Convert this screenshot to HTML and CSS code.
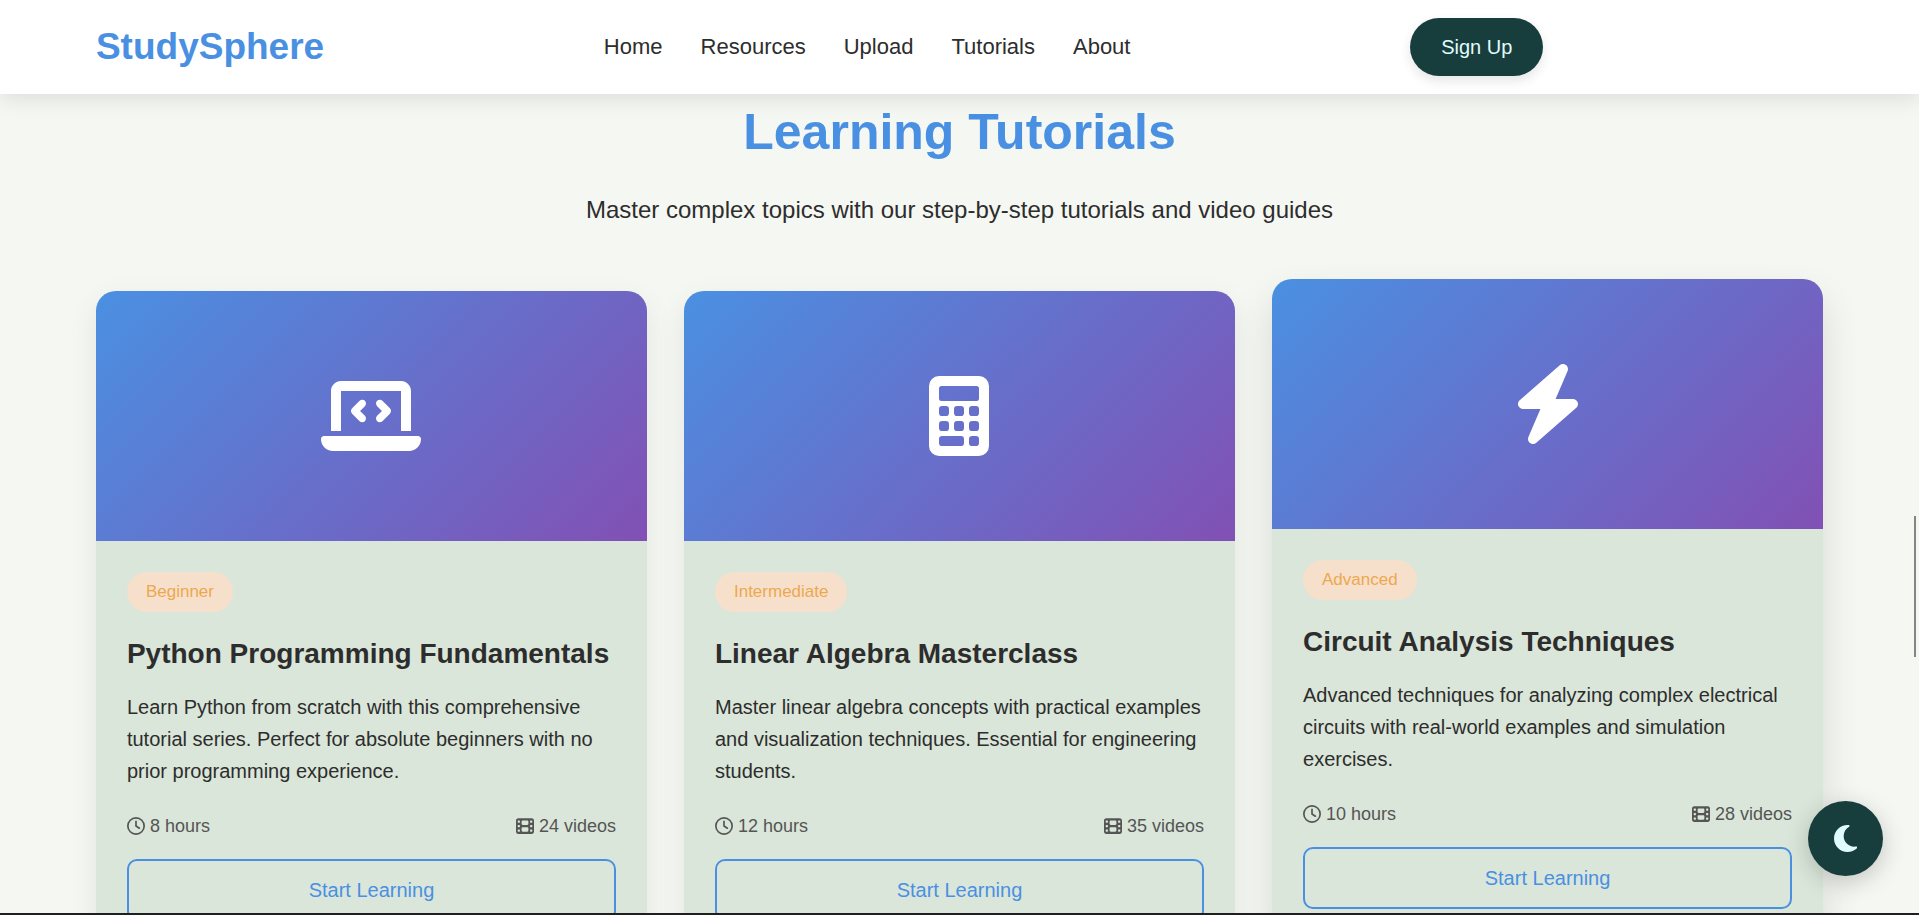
FILE: index.html
```html
<!DOCTYPE html>
<html lang="en">
<head>
<meta charset="utf-8">
<meta name="viewport" content="width=device-width, initial-scale=1">
<title>StudySphere</title>
<link rel="stylesheet" href="styles.css">
</head>
<body>
<svg class="sprite" aria-hidden="true">
  <symbol id="clock" viewBox="0 0 512 512"><path d="M464 256A208 208 0 1 1 48 256a208 208 0 1 1 416 0zM0 256a256 256 0 1 0 512 0A256 256 0 1 0 0 256zM232 120V256c0 8 4 15.5 10.7 20l96 64c11 7.4 25.9 4.4 33.3-6.7s4.4-25.9-6.7-33.3L280 243.2V120c0-13.3-10.7-24-24-24s-24 10.7-24 24z"/></symbol>
  <symbol id="film" viewBox="0 0 512 512"><path fill-rule="evenodd" d="M0 96C0 60.7 28.7 32 64 32H448c35.3 0 64 28.7 64 64V416c0 35.3-28.7 64-64 64H64c-35.3 0-64-28.7-64-64V96zM48 368v32c0 8.8 7.2 16 16 16H96c8.8 0 16-7.2 16-16V368c0-8.8-7.2-16-16-16H64c-8.8 0-16 7.2-16 16zm368-16c-8.8 0-16 7.2-16 16v32c0 8.8 7.2 16 16 16h32c8.8 0 16-7.2 16-16V368c0-8.8-7.2-16-16-16H416zM48 240v32c0 8.8 7.2 16 16 16H96c8.8 0 16-7.2 16-16V240c0-8.8-7.2-16-16-16H64c-8.8 0-16 7.2-16 16zm368-16c-8.8 0-16 7.2-16 16v32c0 8.8 7.2 16 16 16h32c8.8 0 16-7.2 16-16V240c0-8.8-7.2-16-16-16H416zM48 112v32c0 8.8 7.2 16 16 16H96c8.8 0 16-7.2 16-16V112c0-8.8-7.2-16-16-16H64c-8.8 0-16 7.2-16 16zm368-16c-8.8 0-16 7.2-16 16v32c0 8.8 7.2 16 16 16h32c8.8 0 16-7.2 16-16V112c0-8.8-7.2-16-16-16H416zM160 128v64c0 17.7 14.3 32 32 32H320c17.7 0 32-14.3 32-32V128c0-17.7-14.3-32-32-32H192c-17.7 0-32 14.3-32 32zm32 160c-17.7 0-32 14.3-32 32v64c0 17.7 14.3 32 32 32H320c17.7 0 32-14.3 32-32V320c0-17.7-14.3-32-32-32H192z"/></symbol>
</svg>

<header class="header">
  <a class="logo" href="#">StudySphere</a>
  <nav class="nav">
    <a href="#">Home</a>
    <a href="#">Resources</a>
    <a href="#">Upload</a>
    <a href="#">Tutorials</a>
    <a href="#">About</a>
  </nav>
  <button class="signup" type="button">Sign Up</button>
</header>

<main class="tutorials">
  <h2 class="section-title">Learning Tutorials</h2>
  <p class="section-subtitle">Master complex topics with our step-by-step tutorials and video guides</p>
  <div class="grid">
    <article class="card">
      <div class="thumb">
        <svg class="thumb-icon" viewBox="0 0 640 512" aria-hidden="true"><path d="M64 96c0-35.3 28.7-64 64-64H512c35.3 0 64 28.7 64 64V352H512V96H128V352H64V96zM0 403.2C0 392.6 8.6 384 19.2 384H620.8c10.6 0 19.2 8.6 19.2 19.2c0 42.4-34.4 76.8-76.8 76.8H76.8C34.4 480 0 445.6 0 403.2zM281 193l-31 31 31 31c9.4 9.4 9.4 24.6 0 33.9s-24.6 9.4-33.9 0l-48-48c-9.4-9.4-9.4-24.6 0-33.9l48-48c9.4-9.4 24.6-9.4 33.9 0s9.4 24.6 0 33.9zM393 159l48 48c9.4 9.4 9.4 24.6 0 33.9l-48 48c-9.4 9.4-24.6 9.4-33.9 0s-9.4-24.6 0-33.9l31-31-31-31c-9.4-9.4-9.4-24.6 0-33.9s24.6-9.4 33.9 0z"/></svg>
      </div>
      <div class="card-body">
        <span class="level">Beginner</span>
        <h3 class="card-title">Python Programming Fundamentals</h3>
        <p class="card-text">Learn Python from scratch with this comprehensive tutorial series. Perfect for absolute beginners with no prior programming experience.</p>
        <div class="meta">
          <span class="meta-item"><svg class="meta-icon" aria-hidden="true"><use href="#clock"/></svg>8 hours</span>
          <span class="meta-item"><svg class="meta-icon" aria-hidden="true"><use href="#film"/></svg>24 videos</span>
        </div>
        <button class="start" type="button">Start Learning</button>
      </div>
    </article>
    <article class="card">
      <div class="thumb">
        <svg class="thumb-icon" viewBox="0 0 384 512" aria-hidden="true"><path fill-rule="evenodd" d="M64 0H320a64 64 0 0 1 64 64V448a64 64 0 0 1-64 64H64a64 64 0 0 1-64-64V64A64 64 0 0 1 64 0zM80 64a16 16 0 0 0-16 16v64a16 16 0 0 0 16 16H304a16 16 0 0 0 16-16V80a16 16 0 0 0-16-16zM84 192h24a20 20 0 0 1 20 20v24a20 20 0 0 1-20 20h-24a20 20 0 0 1-20-20v-24a20 20 0 0 1 20-20zM180 192h24a20 20 0 0 1 20 20v24a20 20 0 0 1-20 20h-24a20 20 0 0 1-20-20v-24a20 20 0 0 1 20-20zM276 192h24a20 20 0 0 1 20 20v24a20 20 0 0 1-20 20h-24a20 20 0 0 1-20-20v-24a20 20 0 0 1 20-20zM84 288h24a20 20 0 0 1 20 20v24a20 20 0 0 1-20 20h-24a20 20 0 0 1-20-20v-24a20 20 0 0 1 20-20zM180 288h24a20 20 0 0 1 20 20v24a20 20 0 0 1-20 20h-24a20 20 0 0 1-20-20v-24a20 20 0 0 1 20-20zM276 288h24a20 20 0 0 1 20 20v24a20 20 0 0 1-20 20h-24a20 20 0 0 1-20-20v-24a20 20 0 0 1 20-20zM84 384h120a20 20 0 0 1 20 20v24a20 20 0 0 1-20 20h-120a20 20 0 0 1-20-20v-24a20 20 0 0 1 20-20zM276 384h24a20 20 0 0 1 20 20v24a20 20 0 0 1-20 20h-24a20 20 0 0 1-20-20v-24a20 20 0 0 1 20-20z"/></svg>
      </div>
      <div class="card-body">
        <span class="level">Intermediate</span>
        <h3 class="card-title">Linear Algebra Masterclass</h3>
        <p class="card-text">Master linear algebra concepts with practical examples and visualization techniques. Essential for engineering students.</p>
        <div class="meta">
          <span class="meta-item"><svg class="meta-icon" aria-hidden="true"><use href="#clock"/></svg>12 hours</span>
          <span class="meta-item"><svg class="meta-icon" aria-hidden="true"><use href="#film"/></svg>35 videos</span>
        </div>
        <button class="start" type="button">Start Learning</button>
      </div>
    </article>
    <article class="card card-raised">
      <div class="thumb">
        <svg class="thumb-icon" viewBox="0 0 448 512" aria-hidden="true"><path d="M349.4 44.6c5.9-13.7 1.5-29.7-10.6-38.5s-28.6-8-39.9 1.8l-256 224c-10 8.8-13.6 22.9-8.9 35.3S50.7 288 64 288H175.5L98.6 467.4c-5.9 13.7-1.5 29.7 10.6 38.5s28.6 8 39.9-1.8l256-224c10-8.8 13.6-22.9 8.9-35.3s-16.6-20.7-30-20.7H272.5L349.4 44.6z"/></svg>
      </div>
      <div class="card-body">
        <span class="level">Advanced</span>
        <h3 class="card-title">Circuit Analysis Techniques</h3>
        <p class="card-text">Advanced techniques for analyzing complex electrical circuits with real-world examples and simulation exercises.</p>
        <div class="meta">
          <span class="meta-item"><svg class="meta-icon" aria-hidden="true"><use href="#clock"/></svg>10 hours</span>
          <span class="meta-item"><svg class="meta-icon" aria-hidden="true"><use href="#film"/></svg>28 videos</span>
        </div>
        <button class="start" type="button">Start Learning</button>
      </div>
    </article>
  </div>
</main>

<button class="theme-toggle" type="button" aria-label="Toggle dark mode">
  <svg class="theme-icon" viewBox="0 0 384 512" aria-hidden="true"><path d="M223.5 32C100 32 0 132.3 0 256S100 480 223.5 480c60.6 0 115.5-24.2 155.8-63.4c5-4.9 6.3-12.5 3.1-18.7s-10.1-9.7-17-8.5c-9.8 1.7-19.8 2.6-30.1 2.6c-96.9 0-175.5-78.8-175.5-176c0-65.8 36-123.1 89.3-153.3c6.1-3.5 9.2-10.5 7.7-17.3s-7.3-11.9-14.3-12.5c-6.3-.5-12.6-.8-19-.8z"/></svg>
</button>
<div class="scroll-thumb"></div>
<div class="bottom-edge"></div>
</body>
</html>
```
FILE: styles.css
```css
* {
  box-sizing: border-box;
  margin: 0;
  padding: 0;
}

body {
  height: 100vh;
  overflow: hidden;
  background: #f5f7f2;
  color: #2d2d2d;
  font-family: "Liberation Sans", Arial, sans-serif;
  font-size: 20px;
  line-height: 32px;
}

a {
  color: inherit;
  text-decoration: none;
}

button {
  font: inherit;
  cursor: pointer;
}

svg {
  fill: currentColor;
}

.sprite {
  display: none;
}

.header {
  position: relative;
  z-index: 2;
  display: flex;
  align-items: center;
  justify-content: space-between;
  padding: 18px 5%;
  background: #fff;
  box-shadow: 0 5px 20px rgba(0, 0, 0, 0.1);
}

.header::after {
  content: "";
}

.logo {
  color: #4a90e2;
  font-size: 37px;
  font-weight: 700;
}

.nav {
  display: flex;
  gap: 38px;
  font-size: 22px;
}

.signup {
  padding: 13px 31px;
  border: 0;
  border-radius: 30px;
  background: #183d3d;
  color: #e0fbfc;
  box-shadow: 0 5px 12px rgba(0, 0, 0, 0.1);
}

.tutorials {
  padding: 13px 5% 100px;
}

.section-title {
  color: #4a90e2;
  font-size: 50px;
  line-height: 50px;
  text-align: center;
}

.section-subtitle {
  margin: 35px 0 63px;
  font-size: 24px;
  line-height: 36px;
  text-align: center;
}

.grid {
  display: grid;
  grid-template-columns: repeat(3, 1fr);
  gap: 37px;
}

.card {
  overflow: hidden;
  border-radius: 20px;
  background: #dae6d9;
  box-shadow: 0 10px 30px rgba(0, 0, 0, 0.08);
}

.card-raised {
  transform: translateY(-12px);
  box-shadow: 0 18px 38px rgba(0, 0, 0, 0.12);
}

.thumb {
  display: flex;
  align-items: center;
  justify-content: center;
  height: 250px;
  background: linear-gradient(135deg, #4a90e2, #8250b4);
  color: #fff;
}

.thumb-icon {
  height: 80px;
}

.card-body {
  padding: 31px;
}

.level {
  display: inline-block;
  padding: 6px 19px;
  border-radius: 20px;
  background: #f7e0cb;
  color: #eda84f;
  font-size: 17px;
  line-height: 28px;
  vertical-align: top;
}

.card-title {
  margin: 20px 0 15px;
  font-size: 28px;
  line-height: 44px;
}

.card-text {
  margin-bottom: 25px;
}

.meta {
  display: flex;
  justify-content: space-between;
  margin-bottom: 19px;
  color: #555;
  font-size: 18px;
  line-height: 28px;
}

.meta-item {
  display: flex;
  align-items: center;
  gap: 5px;
}

.meta-icon {
  width: 18px;
  height: 18px;
}

.start {
  width: 100%;
  padding: 13px;
  border: 2px solid #4a90e2;
  border-radius: 10px;
  background: transparent;
  color: #4a90e2;
}

.theme-toggle {
  position: fixed;
  right: 36px;
  bottom: 39px;
  z-index: 3;
  display: flex;
  align-items: center;
  justify-content: center;
  width: 75px;
  height: 75px;
  border: 0;
  border-radius: 50%;
  background: #183d3d;
  color: #e0fbfc;
  box-shadow: 0 6px 25px rgba(0, 0, 0, 0.2);
}

.theme-icon {
  height: 31px;
}

.scroll-thumb {
  position: fixed;
  top: 516px;
  right: 3px;
  width: 2px;
  height: 141px;
  background: #858585;
}

.bottom-edge {
  position: fixed;
  right: 0;
  bottom: 0;
  left: 0;
  z-index: 4;
  height: 2px;
  background: #1f1f1f;
}
```
